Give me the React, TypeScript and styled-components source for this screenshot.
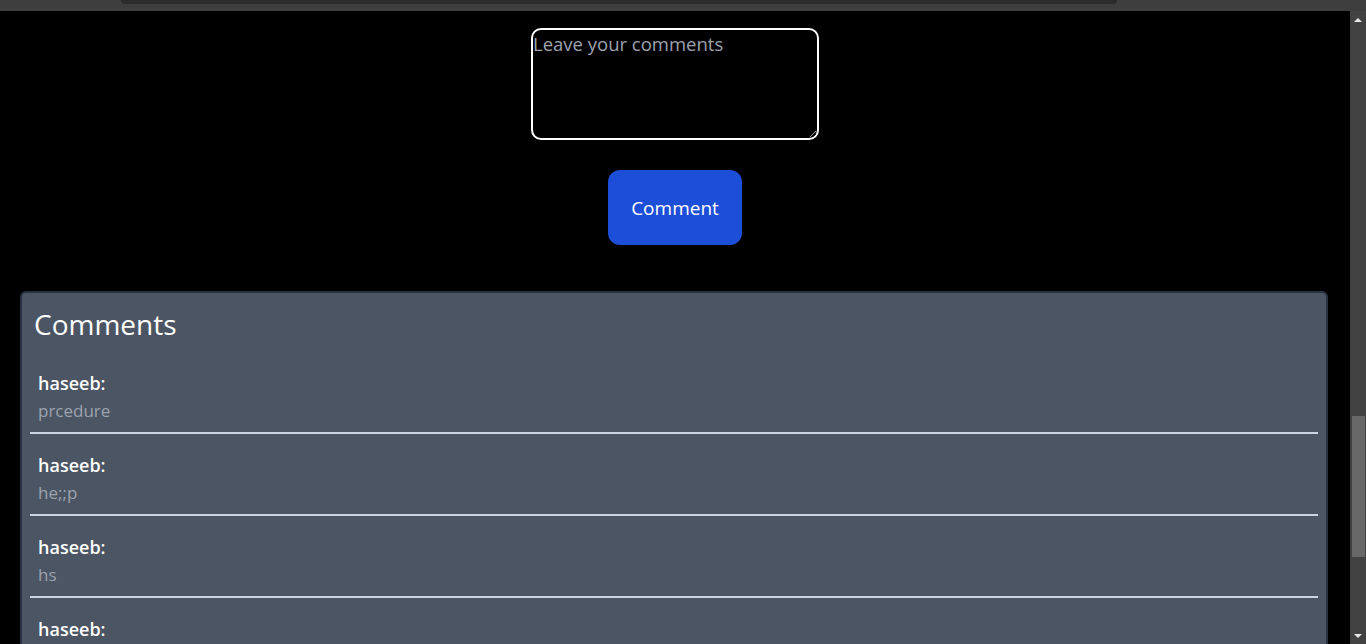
import React, { useState } from 'react';
import styled, { createGlobalStyle } from 'styled-components';

const GlobalStyle = createGlobalStyle`
  html, body {
    margin: 0;
    padding: 0;
    background: #000;
    height: 100%;
    overflow: hidden;
  }
  body {
    font-family: "Open Sans", "Noto Sans", "Liberation Sans", sans-serif;
  }
`;

const Page = styled.div`
  display: flex;
  flex-direction: column;
  width: 1366px;
  height: 644px;
  background: #000;
`;

const TopStrip = styled.div`
  height: 11px;
  background: #3e3e3e;
  display: flex;
  padding-left: 121px;
  flex-shrink: 0;
`;

const TopTab = styled.div`
  width: 996px;
  height: 4px;
  background: #2c2c2c;
  border-radius: 0 0 8px 8px;
`;

const Body = styled.div`
  flex: 1;
  display: flex;
  min-height: 0;
`;

const Main = styled.main`
  flex: 1;
  display: flex;
  flex-direction: column;
  align-items: center;
  padding-top: 17px;
  overflow: hidden;

  & > * {
    flex-shrink: 0;
  }
`;

const CommentBox = styled.textarea`
  width: 288px;
  height: 112px;
  box-sizing: border-box;
  background: #000;
  color: #fff;
  border: 2px solid #fff;
  border-radius: 10px;
  padding: 0;
  font-family: inherit;
  font-size: 18.5px;
  line-height: 28px;
  resize: vertical;
  outline: none;

  &::placeholder {
    color: #9ca3af;
  }
`;

const SubmitButton = styled.button`
  margin-top: 30px;
  width: 134px;
  height: 75px;
  background: #1d4ed8;
  color: #fff;
  border: none;
  border-radius: 12px;
  font-family: inherit;
  font-size: 19px;
  cursor: pointer;
`;

const Panel = styled.section`
  align-self: stretch;
  margin: 46px 22px 0 20px;
  background: #4b5563;
  border: 2px solid #293241;
  border-bottom: none;
  border-radius: 6px 6px 0 0;
  padding: 0 8px;
`;

const PanelTitle = styled.h2`
  margin: 0;
  padding: 11px 4px 8px;
  color: #fff;
  font-size: 28px;
  font-weight: 400;
  line-height: 40px;
`;

const Item = styled.div`
  padding: 17px 8px 7px;
  border-bottom: 2px solid #cbd5e1;
`;

const Author = styled.div`
  color: #fff;
  font-size: 18px;
  font-weight: 600;
  line-height: 28px;
`;

const Text = styled.div`
  color: #9ca3af;
  font-size: 17px;
  line-height: 28px;
`;

const Scrollbar = styled.div`
  width: 16px;
  background: #424242;
  display: flex;
  flex-direction: column;
  align-items: center;
  flex-shrink: 0;
`;

const Arrow = styled.div<{ $down?: boolean }>`
  width: 0;
  height: 0;
  border-left: 4px solid transparent;
  border-right: 4px solid transparent;
  ${(p) => (p.$down ? 'border-top: 4px solid #e8e8e8;' : 'border-bottom: 4px solid #e8e8e8;')}
  margin: ${(p) => (p.$down ? 'auto 0 6px' : '7px 0 0')};
`;

const Thumb = styled.div`
  width: 13px;
  height: 141px;
  background: #686868;
  margin-top: 394px;
`;

const comments = [
  { user: 'haseeb', text: 'prcedure' },
  { user: 'haseeb', text: 'he;;p' },
  { user: 'haseeb', text: 'hs' },
  { user: 'haseeb', text: '' },
];

export default function App() {
  const [value, setValue] = useState('');

  return (
    <>
      <GlobalStyle />
      <Page>
        <TopStrip>
          <TopTab />
        </TopStrip>
        <Body>
          <Main>
            <CommentBox
              placeholder="Leave your comments"
              value={value}
              onChange={(e) => setValue(e.target.value)}
            />
            <SubmitButton>Comment</SubmitButton>
            <Panel>
              <PanelTitle>Comments</PanelTitle>
              {comments.map((c, i) => (
                <Item key={i}>
                  <Author>{c.user}:</Author>
                  {c.text && <Text>{c.text}</Text>}
                </Item>
              ))}
            </Panel>
          </Main>
          <Scrollbar>
            <Arrow />
            <Thumb />
            <Arrow $down />
          </Scrollbar>
        </Body>
      </Page>
    </>
  );
}
